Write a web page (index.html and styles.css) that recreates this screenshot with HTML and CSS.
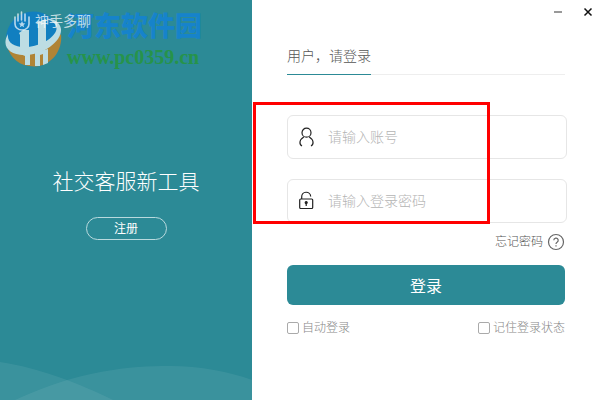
FILE: index.html
```html
<!DOCTYPE html>
<html lang="zh-CN">
<head>
    <meta charset="UTF-8">
    <meta name="viewport" content="width=device-width, initial-scale=1.0">
    <title>神手多聊</title>
    <link rel="stylesheet" href="styles.css">
</head>
<body>

<div class="window">
    <aside class="side">
        <div class="brand">
            <svg class="brand-icon" width="18" height="20" viewBox="0 0 18 20">
                <path d="M2 6v7a7 6 0 0 0 14 0V6M5 3v7M8.500 1v8M12 3v7" fill="none" stroke="#fff" stroke-width="1.600" stroke-linecap="round"/>
                <path d="M9 10l1 2.300 2.400.2-1.900 1.500.6 2.300L9 15l-2.100 1.300.6-2.300-1.900-1.500 2.400-.2z" fill="#fff"/>
            </svg>
            <span>神手多聊</span>
        </div>
        <div class="intro">
            <p class="slogan">社交客服新工具</p>
            <button class="btn-register" type="button">注册</button>
        </div>
        <svg class="waves" viewBox="0 0 252 40" preserveAspectRatio="none">
            <path d="M0 2C40 8 80 24 113 40H0z"/>
            <path d="M15 40C80 10 130 6 170 6C200 6 230 12 252 20V40z"/>
        </svg>
    </aside>

    <main class="main">
        <div class="title-bar">
            <button type="button" aria-label="最小化">
                <svg width="10" height="10" viewBox="0 0 10 10"><path d="M1 5h8" stroke="#777" stroke-width="1.500"/></svg>
            </button>
            <button type="button" aria-label="关闭">
                <svg width="10" height="10" viewBox="0 0 10 10"><path d="M1.500 1.500l7 7M8.500 1.500l-7 7" stroke="#111" stroke-width="1.500"/></svg>
            </button>
        </div>

        <form class="login">
            <div class="tabs"><h1>用户，请登录</h1></div>

            <label class="field">
                <svg width="16" height="20" viewBox="0 0 16 20" fill="none" stroke="#222" stroke-width="1.200">
                    <circle cx="7.500" cy="5.700" r="4.500"/>
                    <path d="M3 19C.2 17.500-.2 13 4.800 10M12 19c2.800-1.500 3.200-6-1.800-9"/>
                </svg>
                <input type="text" placeholder="请输入账号" aria-label="账号">
            </label>
            <label class="field">
                <svg width="16" height="20" viewBox="0 0 16 20" fill="none" stroke="#222" stroke-width="1.200">
                    <rect x=".7" y="8" width="13" height="9.500" rx="1"/>
                    <path d="M2.700 8V6a4.500 4.500 0 0 1 9-.5M7.200 12v3"/>
                    <circle cx="7.200" cy="11.600" r="1" fill="#222"/>
                </svg>
                <input type="password" placeholder="请输入登录密码" aria-label="登录密码">
            </label>

            <a class="forgot" href="#">忘记密码
                <svg width="18" height="18" viewBox="0 0 18 18" fill="none" stroke="#666" stroke-width="1.200">
                    <circle cx="9" cy="9" r="7.500"/>
                    <path d="M6.800 7.300a2.200 2.200 0 1 1 3.300 1.900c-.8.5-1.100.8-1.100 1.800M9 12.200v1.300"/>
                </svg>
            </a>

            <button class="btn-login" type="submit">登录</button>

            <div class="options">
                <label><input type="checkbox">自动登录</label>
                <label><input type="checkbox">记住登录状态</label>
            </div>
        </form>
    </main>

    <div class="watermark">
        <svg width="58" height="60" viewBox="0 0 58 60">
            <circle cx="29.500" cy="30" r="27.500" fill="#117fc0"/>
            <path d="M3 37C18 49 42 42 57 25C59 42 47 57.500 29.500 57.500C16 57.500 6 49 3 37z" fill="#b08435"/>
            <path d="M15 24l4-3h6v17h-9v-12zM32 14l10-4v25l-8 3V15z" fill="#bddde3"/>
            <path d="M14 44h12v12h-5V47zM31 43l13-3v14l-5 2V45l-3 1v11h-5z" fill="#bddde3"/>
            <path d="M4 25C-3 37 5 46 20 46C40 46 58 32 57 20C56 13 49 9 42 10C50 12 54 17 52 22C48 31 34 38 21 38C9 38 3 33 4 25z" fill="#bddde3"/>
        </svg>
        <div>
            <p class="watermark-name">河东软件园</p>
            <p class="watermark-url">www.pc0359.cn</p>
        </div>
    </div>
    <div class="highlight"></div>
</div>

</body>
</html>
```
FILE: styles.css
```css
:root {
    --primary-color: #2c8a96;
    --line-color: #e6e6e6;
}

* {
    box-sizing: border-box;
}

body {
    font-family: "Liberation Sans", "Noto Sans CJK SC", sans-serif;
    font-weight: 300;
    background: #fff;
    margin: 0;
}

h1, p {
    margin: 0;
}

button {
    font-family: inherit;
    cursor: pointer;
}

.window {
    position: relative;
    display: flex;
    min-height: 100vh;
}

/* left panel */
.side {
    flex: 0 0 42%;
    display: flex;
    flex-direction: column;
    background: var(--primary-color);
    color: #fff;
}

.brand {
    position: relative;
    z-index: 1;
    display: flex;
    align-items: center;
    gap: 4px;
    padding: 11px 13px;
    font-size: 14px;
    line-height: 20px;
    font-weight: 400;
    opacity: 0.7;
}

.intro {
    display: flex;
    flex-direction: column;
    align-items: center;
    gap: 21px;
    margin-top: 126px;
}

.slogan {
    font-size: 21px;
    line-height: 28px;
}

.btn-register {
    width: 81px;
    height: 23px;
    padding: 0;
    border: 1px solid #b9dade;
    border-radius: 12px;
    background: none;
    color: #fff;
    font-size: 12px;
    line-height: 20px;
}

.waves {
    width: 100%;
    height: 40px;
    margin-top: auto;
    fill: rgba(255, 255, 255, 0.07);
}

/* right panel */
.main {
    flex: 1;
}

.title-bar {
    display: flex;
    justify-content: flex-end;
    gap: 20px;
    padding: 7px 7px 0 0;
}

.title-bar button {
    display: flex;
    padding: 0;
    border: 0;
    background: none;
}

.login {
    display: flex;
    flex-direction: column;
    padding: 27px 35px 0 35px;
}

.tabs {
    display: flex;
    border-bottom: 1px solid #eee;
    margin-bottom: 40px;
}

.tabs h1 {
    font-size: 14px;
    line-height: 24px;
    font-weight: 300;
    padding-bottom: 6px;
    margin-bottom: -1px;
    border-bottom: 1px solid var(--primary-color);
    color: #555;
}

.field {
    display: flex;
    align-items: center;
    gap: 13px;
    height: 44px;
    padding: 0 11px;
    margin: 0 -2px 20px 0;
    border: 1px solid var(--line-color);
    border-radius: 6px;
}

.field input {
    flex: 1;
    min-width: 0;
    padding: 0;
    border: 0;
    outline: 0;
    background: none;
    font-family: inherit;
    font-size: 14px;
    font-weight: 300;
}

.field input::placeholder {
    color: #b4b4b4;
}

.forgot {
    display: flex;
    align-items: center;
    align-self: flex-end;
    gap: 4px;
    margin-top: -10px;
    font-size: 12px;
    line-height: 18px;
    color: #555;
    text-decoration: none;
}

.btn-login {
    height: 40px;
    margin: 14px 0;
    border: 0;
    border-radius: 6px;
    background: var(--primary-color);
    color: #fff;
    font-size: 16px;
}

.options {
    display: flex;
    justify-content: space-between;
    font-size: 12px;
    line-height: 18px;
    color: #888;
}

.options label {
    display: flex;
    align-items: center;
    gap: 3px;
}

.options input {
    appearance: none;
    width: 12px;
    height: 12px;
    margin: 0;
    border: 1px solid #aaa;
    border-radius: 2px;
}

/* overlays */
.watermark {
    position: absolute;
    top: 9px;
    left: 4px;
    display: flex;
    gap: 5px;
    pointer-events: none;
}

.watermark-name {
    font-size: 27px;
    line-height: 36px;
    font-weight: 900;
    color: #1683cb;
}

.watermark-url {
    font-family: "Liberation Serif", serif;
    font-size: 20px;
    line-height: 24px;
    font-weight: bold;
    color: #26934a;
}

.highlight {
    position: absolute;
    top: 102px;
    left: 253px;
    width: 237px;
    height: 122px;
    border: 3px solid #f00;
    pointer-events: none;
}
```
